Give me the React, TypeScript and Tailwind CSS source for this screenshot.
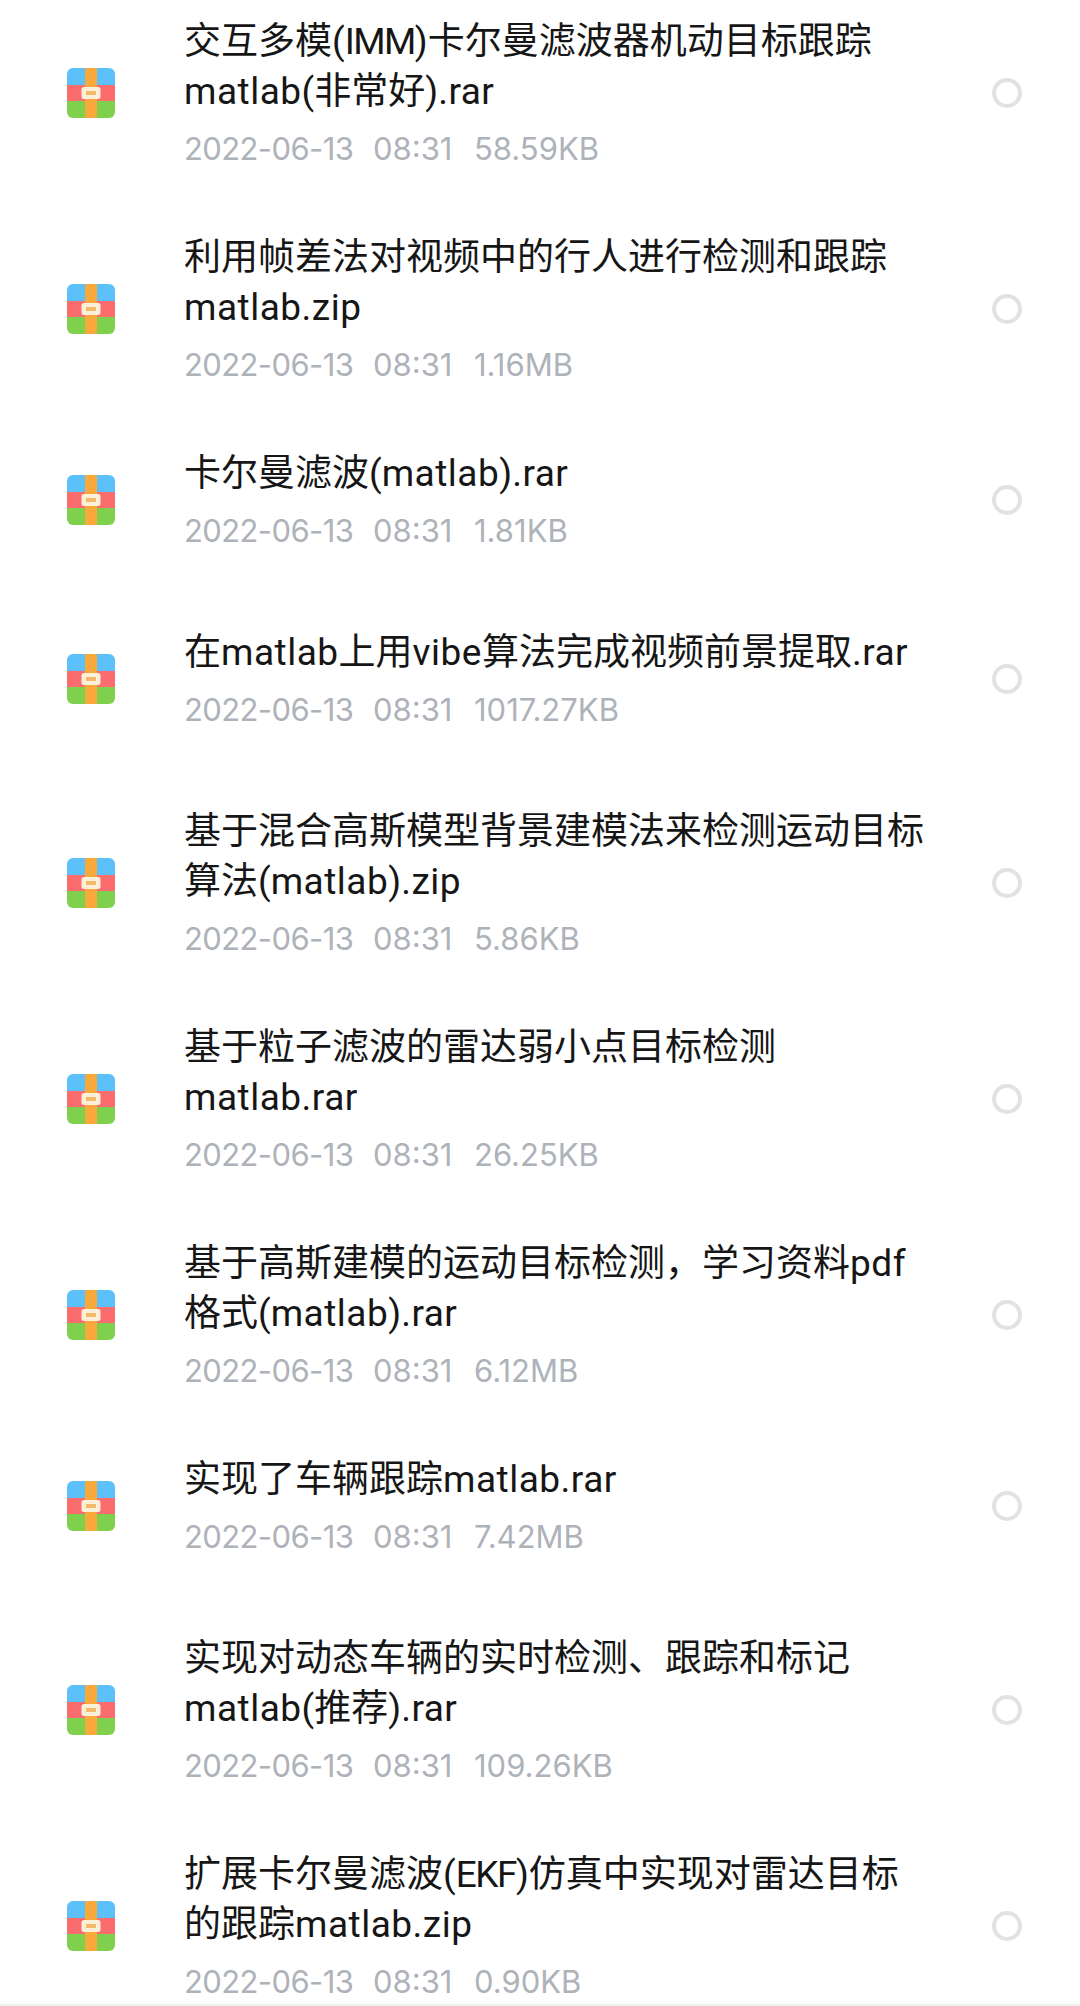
import React from 'react';

type FileItem = { lines: string[]; size: string };

const FILES: FileItem[] = [
  { lines: ['交互多模(IMM)卡尔曼滤波器机动目标跟踪', 'matlab(非常好).rar'], size: '58.59KB' },
  { lines: ['利用帧差法对视频中的行人进行检测和跟踪', 'matlab.zip'], size: '1.16MB' },
  { lines: ['卡尔曼滤波(matlab).rar'], size: '1.81KB' },
  { lines: ['在matlab上用vibe算法完成视频前景提取.rar'], size: '1017.27KB' },
  { lines: ['基于混合高斯模型背景建模法来检测运动目标', '算法(matlab).zip'], size: '5.86KB' },
  { lines: ['基于粒子滤波的雷达弱小点目标检测', 'matlab.rar'], size: '26.25KB' },
  { lines: ['基于高斯建模的运动目标检测，学习资料pdf', '格式(matlab).rar'], size: '6.12MB' },
  { lines: ['实现了车辆跟踪matlab.rar'], size: '7.42MB' },
  { lines: ['实现对动态车辆的实时检测、跟踪和标记', 'matlab(推荐).rar'], size: '109.26KB' },
  { lines: ['扩展卡尔曼滤波(EKF)仿真中实现对雷达目标', '的跟踪matlab.zip'], size: '0.90KB' },
];

const ArchiveIcon = () => (
  <svg width="48" height="50" viewBox="0 0 48 50" className="shrink-0">
    <defs>
      <clipPath id="archive-clip">
        <rect width="48" height="50" rx="6" />
      </clipPath>
    </defs>
    <g clipPath="url(#archive-clip)">
      <rect width="48" height="17" fill="#5cc1fa" />
      <rect y="17" width="48" height="16" fill="#fb6c6e" />
      <rect y="33" width="48" height="17" fill="#7fd04c" />
      <rect x="18" width="12" height="50" fill="#f9a93c" />
    </g>
    <rect x="14.5" y="19" width="19" height="12" rx="2.5" fill="#fdf0d8" />
    <rect x="19" y="23" width="10" height="4" fill="#f3b869" />
  </svg>
);

// latin runs are set a little differently from the CJK around them
const TitleLine = ({ text }: { text: string }) => (
  <div className="text-[37px] leading-[50px] text-[#161616] whitespace-nowrap font-['Roboto','Noto_Sans_CJK_SC',sans-serif]">
    {text.split(/([a-z.]+|[A-Z]+)/).map((part, i) => {
      if (/^[a-z.]+$/.test(part)) return <span key={i} className="tracking-[0.5px]">{part}</span>;
      if (/^[A-Z]+$/.test(part)) return <span key={i} className="tracking-[-1.5px]">{part}</span>;
      return <span key={i}>{part}</span>;
    })}
  </div>
);

const FileRow = ({ file }: { file: FileItem }) => (
  <div className={`flex items-center pl-[67px] pr-[58px] ${file.lines.length > 1 ? 'h-[216px]' : 'h-[166px] mb-[13px]'}`}>
    <ArchiveIcon />
    <div className="ml-[69px] flex-1 min-w-0 pt-[5px]">
      {file.lines.map((line) => (
        <TitleLine key={line} text={line} />
      ))}
      <div className="mt-[7px] flex text-[31px] leading-[50px] text-[#aeb2b9] whitespace-nowrap">
        <span className="w-[189px] tracking-[-0.6px]">2022-06-13</span>
        <span className="w-[101px]">08:31</span>
        <span>{file.size}</span>
      </div>
    </div>
    <div className="w-[30px] h-[30px] rounded-full border-[4px] border-[#e2e2e2] shrink-0" />
  </div>
);

export default function App() {
  return (
    <div className="w-[1080px] h-[2006px] bg-white overflow-hidden flex flex-col font-['Inter','Noto_Sans_CJK_SC',sans-serif]">
      <div className="flex-1 min-h-0 overflow-hidden">
        <div className="-mt-[15px]">
          {FILES.map((file) => (
            <FileRow key={file.lines[0]} file={file} />
          ))}
        </div>
      </div>
      <div className="h-[2px] bg-[#f0f0f0] shrink-0" />
    </div>
  );
}
